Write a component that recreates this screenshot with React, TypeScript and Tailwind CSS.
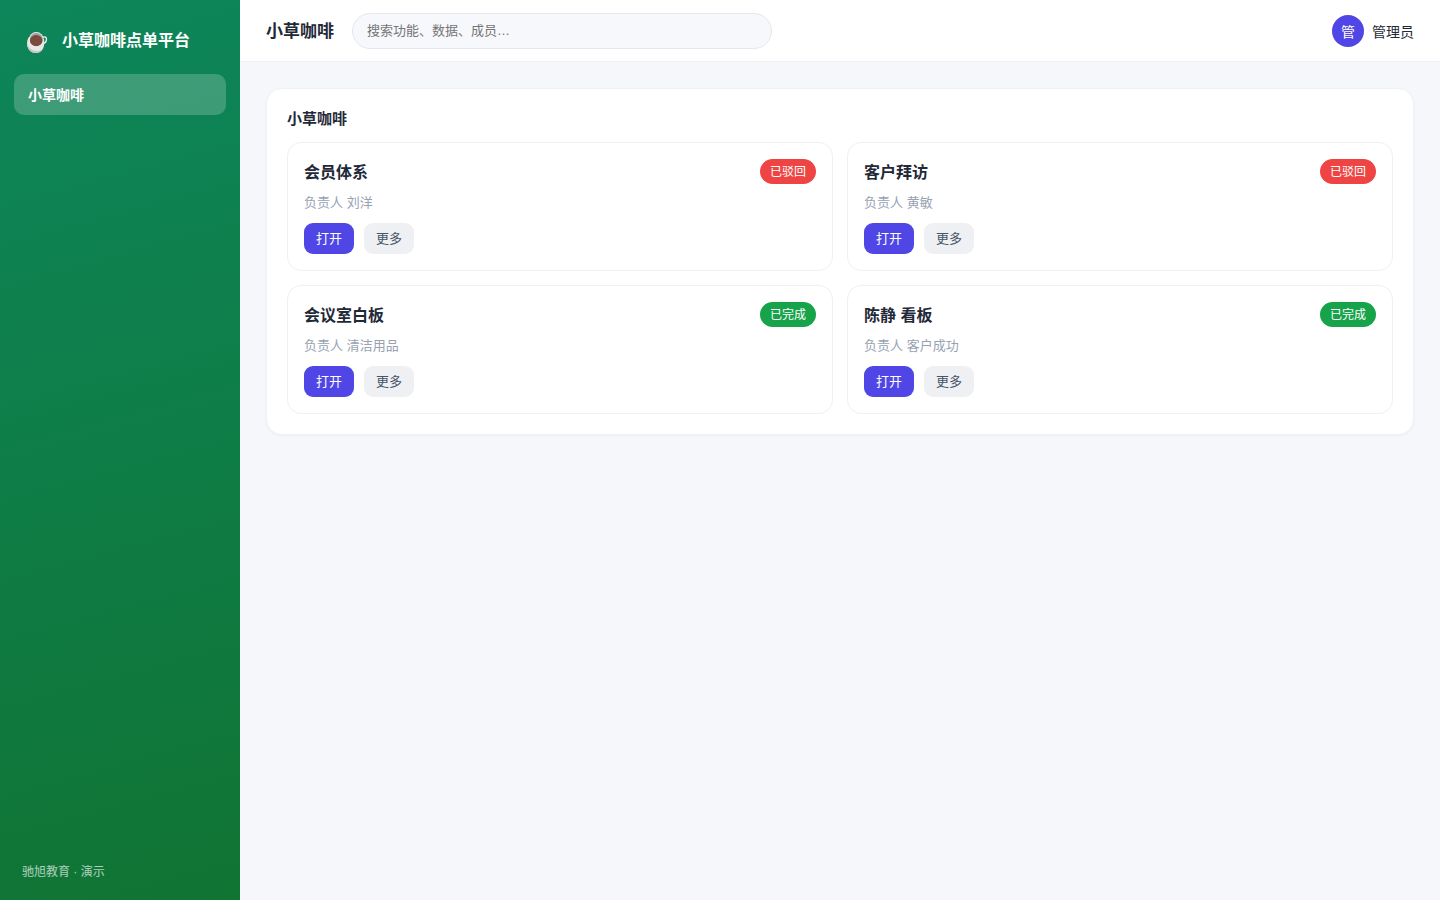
const NAV = ['小草咖啡'];

const ITEMS = [
  { title: '会员体系', owner: '刘洋', status: '已驳回' },
  { title: '客户拜访', owner: '黄敏', status: '已驳回' },
  { title: '会议室白板', owner: '清洁用品', status: '已完成' },
  { title: '陈静 看板', owner: '客户成功', status: '已完成' },
];

const STATUS_COLOR: Record<string, string> = {
  已驳回: 'bg-[#ef4444]',
  已完成: 'bg-[#16a34a]',
};

function CoffeeIcon() {
  return (
    <svg viewBox="0 0 22 22" className="h-[22px] w-[22px]" aria-hidden="true">
      <path d="M17 6.200c2-.9 3.700.1 3.500 2.200-.1 2-1.500 3.800-3.500 4.400" fill="none" stroke="#f2f2f2" strokeWidth="1.300" />
      <path d="M3 6C1.200 8.500.8 11.500 1.200 14.500 1.900 19 5.400 22 9.800 22c3.200 0 5.900-1.700 7.400-4.800 1.200-2.600 1.400-6 .7-9.200z" fill="#e8e8e8" />
      <path d="M1.200 13.500C1.700 18.600 5.200 22 9.800 22c3.200 0 5.900-1.700 7.200-4.600-1.800 1.900-4.200 2.800-6.900 2.600C6 19.700 3 17.400 1.200 13.500z" fill="#c6c6c6" />
      <ellipse cx="10.300" cy="8.300" rx="7.300" ry="7.200" fill="#f7f7f7" />
      <ellipse cx="10.300" cy="8.300" rx="6.500" ry="6.500" fill="#a3a3a3" />
      <ellipse cx="10.200" cy="9.600" rx="6.300" ry="5.600" fill="#7b4a3a" />
    </svg>
  );
}

function ItemCard({ title, owner, status }: { title: string; owner: string; status: string }) {
  return (
    <article className="rounded-[14px] border border-[#eef0f2] bg-white p-4">
      <div className="flex items-start justify-between">
        <h3 className="text-base leading-[27px] font-bold">{title}</h3>
        <span className={`rounded-full px-2.5 pt-0.5 text-xs leading-[23px] text-white ${STATUS_COLOR[status]}`}>
          {status}
        </span>
      </div>
      <p className="mt-[7px] text-[13px] leading-5 text-[#98a2b3]">负责人 {owner}</p>
      <div className="mt-2.5 flex gap-2.5">
        <button type="button" className="rounded-[9px] bg-[#4f46e5] px-3 text-[13px] leading-[31px] text-white">
          打开
        </button>
        <button type="button" className="rounded-[9px] bg-[#eef0f4] px-3 text-[13px] leading-[31px] text-[#475467]">
          更多
        </button>
      </div>
    </article>
  );
}

export default function App() {
  return (
    <div className="flex min-h-screen bg-[#f5f7fb] font-['Liberation_Sans','Noto_Sans_CJK_SC',sans-serif] text-sm text-[#1f2937]">
      <aside className="flex w-60 shrink-0 flex-col bg-linear-[165deg,#0d865b,#107433] px-3.5 pt-[22px] pb-[18px] text-white">
        <div className="flex items-center gap-3.5 px-3">
          <div className="pt-0.5">
            <CoffeeIcon />
          </div>
          <span className="text-base leading-[38px] font-bold">小草咖啡点单平台</span>
        </div>
        <nav className="mt-3.5 flex flex-col">
          {NAV.map((label) => (
            <a key={label} href="#" className="rounded-[10px] bg-white/20 px-3.5 pt-[11px] pb-[9px] leading-[21px] font-bold">
              {label}
            </a>
          ))}
        </nav>
        <p className="mt-auto px-2 text-xs leading-5 text-white/65">驰旭教育 · 演示</p>
      </aside>

      <div className="flex min-w-0 flex-1 flex-col">
        <header className="flex h-[62px] items-center border-b border-[#eef0f4] bg-white px-[26px]">
          <h1 className="pt-1 text-[17px] font-bold">小草咖啡</h1>
          <input
            type="search"
            aria-label="搜索"
            placeholder="搜索功能、数据、成员…"
            className="ml-[18px] h-9 w-[420px] rounded-full border border-gray-200 bg-[#f7f8fc] px-3.5 text-[13px] placeholder:text-[#757575]"
          />
          <div className="ml-auto flex items-center gap-2">
            <span className="flex size-8 items-center justify-center rounded-full bg-[#4f46e5] pt-0.5 text-sm text-white">管</span>
            <span className="pt-0.5">管理员</span>
          </div>
        </header>

        <main className="p-[26px]">
          <section className="rounded-2xl border border-[#f0f2f5] bg-white p-5 shadow-[0_1px_3px_rgba(16,24,40,0.04)]">
            <h2 className="text-[15px] leading-5 font-bold">小草咖啡</h2>
            <div className="mt-[13px] grid grid-cols-2 gap-3.5">
              {ITEMS.map((item) => (
                <ItemCard key={item.title} {...item} />
              ))}
            </div>
          </section>
        </main>
      </div>
    </div>
  );
}
